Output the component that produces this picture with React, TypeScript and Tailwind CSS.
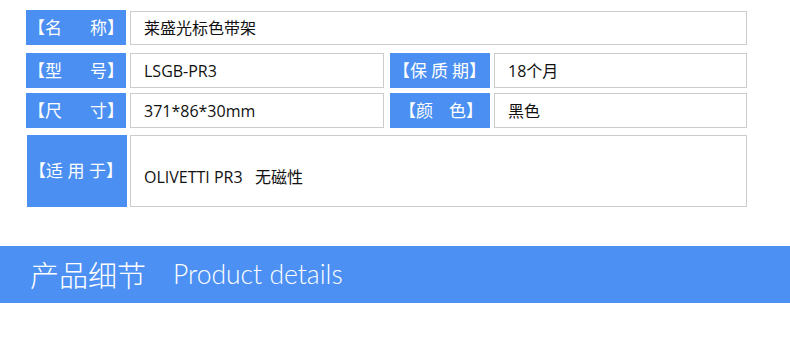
import React from 'react';

const cjk = "font-['Open_Sans','Noto_Sans_CJK_SC',sans-serif]";

// blue label cell; spread = chars pushed to both edges, else packed with small gaps
function Label({ parts, spread = true, inner = 'mx-[2px]', className = '' }: { parts: string[]; spread?: boolean; inner?: string; className?: string }) {
  return (
    <div className={`w-[100px] shrink-0 bg-[#4a8ff1] text-white text-[17px] flex items-center ${cjk} ${className}`}>
      <div className={spread ? `flex-1 flex justify-between ${inner}` : 'flex gap-[4px] pl-[3px]'}>
        {parts.map((p, i) => (
          <span key={i}>{p}</span>
        ))}
      </div>
    </div>
  );
}

function Value({ children, className = '' }: { children: React.ReactNode; className?: string }) {
  return (
    <div
      className={`border border-[#cccccc] bg-white text-[16px] text-[#111111] flex items-center pl-[13px] ${cjk} ${className}`}
    >
      {children}
    </div>
  );
}

export default function App() {
  return (
    <div className="w-[790px] h-[349px] bg-white overflow-hidden">
      {/* spec table */}
      <div className="pt-[10px] pl-[26px] w-[747px] flex flex-col">
        <div className="flex h-[35px] gap-[4px]">
          <Label parts={['【名', '称】']} />
          <Value className="flex-1 mt-[1px]">莱盛光标色带架</Value>
        </div>

        <div className="flex h-[35px] gap-[4px] mt-[8px]">
          <Label parts={['【型', '号】']} />
          <Value className="w-[254px]">LSGB-PR3</Value>
          <Label parts={['【保', '质', '期】']} spread={false} className="ml-[2px]" />
          <Value className="flex-1">18个月</Value>
        </div>

        <div className="flex h-[35px] gap-[4px] mt-[5px]">
          <Label parts={['【尺', '寸】']} />
          <Value className="w-[254px]">371*86*30mm</Value>
          <Label parts={['【颜', '色】']} inner="ml-[9px] mr-[7px]" className="ml-[2px]" />
          <Value className="flex-1">黑色</Value>
        </div>

        <div className="flex h-[72px] gap-[3px] mt-[7px]">
          <Label parts={['【适', '用', '于】']} inner="ml-[2px] mr-[4px]" className="ml-[1px]" />
          <Value className="flex-1 pt-3">OLIVETTI PR3&nbsp;&nbsp; 无磁性</Value>
        </div>
      </div>

      {/* section banner */}
      <div className="mt-[39px] h-[57px] bg-[#4b90f2] flex items-center pl-[30px] text-white">
        <span className="text-[29px] font-light font-['Noto_Sans_CJK_SC',sans-serif] leading-none">产品细节</span>
        <span className="ml-[27px] text-[26.5px] font-light font-['Lato',sans-serif] leading-none">Product details</span>
      </div>
    </div>
  );
}
